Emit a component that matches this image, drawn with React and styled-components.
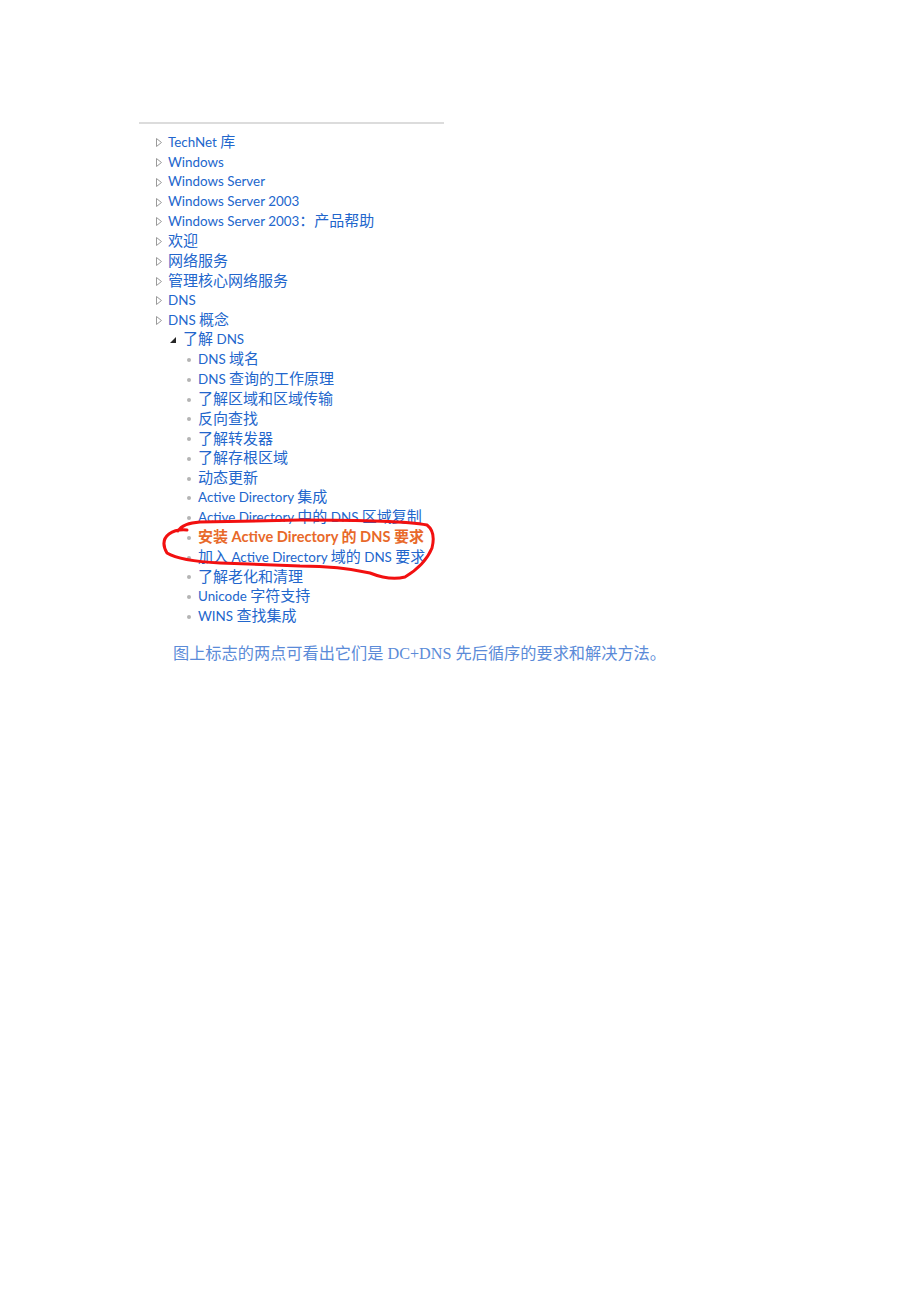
import styled, { createGlobalStyle } from "styled-components";

const GlobalStyle = createGlobalStyle`
    body {
        margin: 0;
        background: #ffffff;
    }
`

const items = [
    { level: 1, text: "TechNet 库" },
    { level: 1, text: "Windows" },
    { level: 1, text: "Windows Server" },
    { level: 1, text: "Windows Server 2003" },
    { level: 1, text: "Windows Server 2003：产品帮助" },
    { level: 1, text: "欢迎" },
    { level: 1, text: "网络服务" },
    { level: 1, text: "管理核心网络服务" },
    { level: 1, text: "DNS" },
    { level: 1, text: "DNS 概念" },
    { level: 2, text: "了解 DNS" },
    { level: 3, text: "DNS 域名" },
    { level: 3, text: "DNS 查询的工作原理" },
    { level: 3, text: "了解区域和区域传输" },
    { level: 3, text: "反向查找" },
    { level: 3, text: "了解转发器" },
    { level: 3, text: "了解存根区域" },
    { level: 3, text: "动态更新" },
    { level: 3, text: "Active Directory 集成" },
    { level: 3, text: "Active Directory 中的 DNS 区域复制" },
    { level: 3, text: "安装 Active Directory 的 DNS 要求", active: true },
    { level: 3, text: "加入 Active Directory 域的 DNS 要求" },
    { level: 3, text: "了解老化和清理" },
    { level: 3, text: "Unicode 字符支持" },
    { level: 3, text: "WINS 查找集成" },
]

const indent = { 1: 17, 2: 31, 3: 48 }
const slot = { 1: 12, 2: 13, 3: 11 }

// latin runs are set smaller so they keep the narrow Segoe-like widths
const cjk = /([\u3000-\u9fff\uff00-\uffef]+)/
function Runs({ text, bold }) {
    return text.split(cjk).filter(Boolean).map((part, i) =>
        cjk.test(part) ? <span key={i}>{part}</span> : <Latin key={i} $bold={bold}>{part}</Latin>
    )
}

function Marker({ level }) {
    if (level === 1) {
        return (
            <svg width="6" height="9" viewBox="0 0 6 9">
                <polygon points="0.5,0.5 5.5,4.5 0.5,8.5" fill="#fff" stroke="#9a9a9a" strokeWidth="1" />
            </svg>
        )
    }
    if (level === 2) {
        return (
            <svg width="6" height="6" viewBox="0 0 6 6">
                <polygon points="0,6 6,0 6,6" fill="#262626" />
            </svg>
        )
    }
    return <Dot />
}

export default function App() {
    return (
        <>
            <GlobalStyle />
            <Page>
                <Panel>
                    <Rule />
                    <Tree>
                        {items.map((it, i) => (
                            <Row key={i} $indent={indent[it.level]}>
                                <IconSlot $w={slot[it.level]}>
                                    <Marker level={it.level} />
                                </IconSlot>
                                <Label $active={it.active}><Runs text={it.text} bold={it.active} /></Label>
                            </Row>
                        ))}
                        <Scribble width="280" height="70" viewBox="160 515 280 70">
                            <path
                                d="M178 531 Q183 523 200 522 L300 520 Q400 520 427 525 Q436 532 432 548 Q425 565 405 577 Q390 581 370 573 Q340 566 300 566 L220 563 Q180 561 167 553 Q160 541 169 534 Q176 529 187 530"
                                fill="none"
                                stroke="#f21010"
                                strokeWidth="3"
                                strokeLinecap="round"
                                strokeLinejoin="round"
                            />
                        </Scribble>
                    </Tree>
                </Panel>
                <Caption>图上标志的两点可看出它们是 DC+DNS 先后循序的要求和解决方法。</Caption>
            </Page>
        </>
    )
}

const Page = styled.div`
    width: 920px;
    height: 1302px;
    box-sizing: border-box;
    padding: 122px 0 0 139px;
`
const Panel = styled.div`
    width: 305px;
`
const Rule = styled.div`
    height: 2px;
    background-color: #dcdcdc;
    margin-bottom: 8px;
`
const Tree = styled.div`
    position: relative;
    display: flex;
    flex-direction: column;
`
const Row = styled.div`
    display: flex;
    align-items: center;
    height: 19.75px;
    padding-left: ${p => p.$indent}px;
    white-space: nowrap;
`
const IconSlot = styled.span`
    display: flex;
    align-items: center;
    width: ${p => p.$w}px;
    flex-shrink: 0;
    margin-top: 2px;
`
const Dot = styled.span`
    width: 4px;
    height: 4px;
    border-radius: 50%;
    background-color: #b4b4b4;
`
const Label = styled.span`
    font-family: "Lato", "Noto Sans CJK SC", sans-serif;
    font-size: 15px;
    line-height: 19px;
    color: ${p => p.$active ? "#e8692a" : "#2266cc"};
    font-weight: ${p => p.$active ? 700 : 400};
`
const Latin = styled.span`
    font-size: ${p => p.$bold ? 14.6 : 13.4}px;
`
const Scribble = styled.svg`
    position: absolute;
    left: 21px;
    top: 383px;
    overflow: visible;
    pointer-events: none;
`
const Caption = styled.p`
    margin: 18px 0 0 34px;
    font-family: "Liberation Serif", "Noto Sans CJK SC", serif;
    font-size: 16.2px;
    line-height: 20px;
    color: #5b8bd8;
    white-space: nowrap;
`
